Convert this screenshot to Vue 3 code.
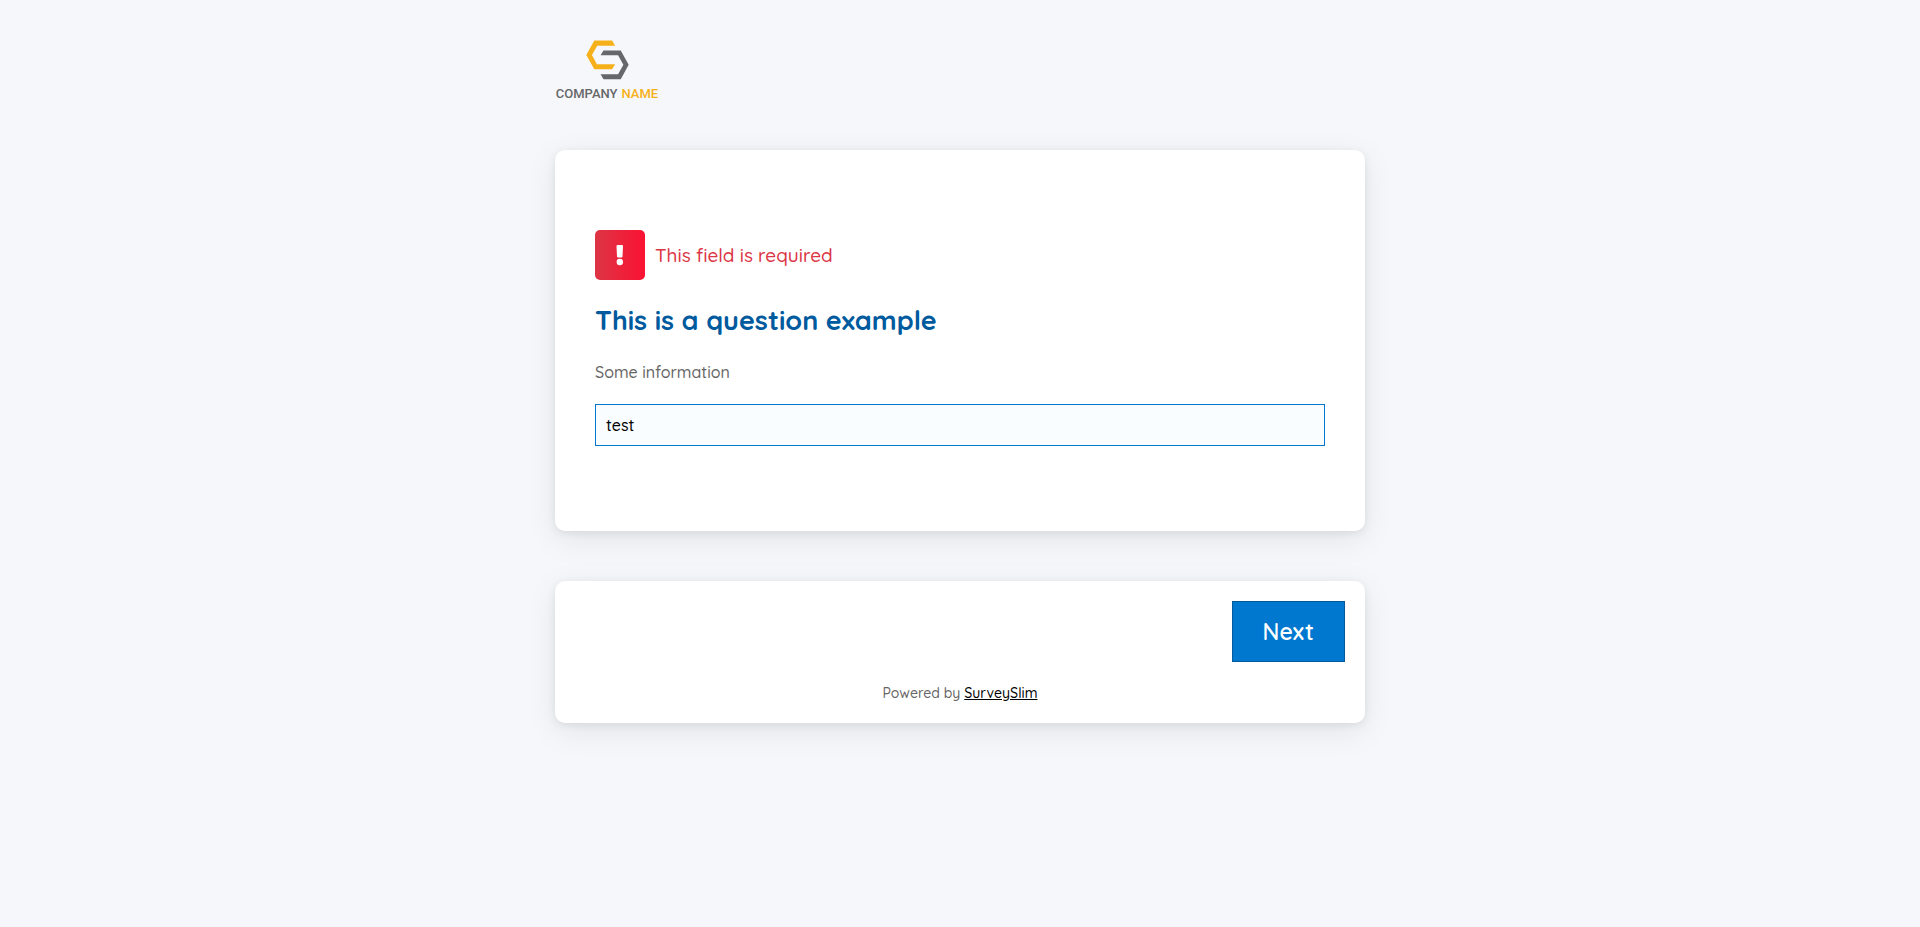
<script setup>
import { ref } from 'vue'

const answer = ref('test')
</script>

<template>
  <main class="page">
    <header class="brand">
      <svg class="mark" viewBox="0 0 130 120" aria-hidden="true">
        <path d="M25 1H79L88 17H34L18 45L33 73H88L79 88H25L1 45Z" fill="#f6b11a" />
        <path d="M53 31H105L129 74L105 118H53L44 103H97L113 74L97 46H44Z" fill="#666769" />
      </svg>
      <div class="name"><span>COMPANY</span><span class="accent">NAME</span></div>
    </header>

    <form class="survey" @submit.prevent>
      <section class="card question">
        <div class="error" role="alert">
          <span class="error-icon">
            <svg viewBox="0 0 50 50" aria-hidden="true">
              <path d="M21.500 16Q21.500 15 22.500 15H27Q28 15 28 16L27.500 26.500Q27.400 27.500 26.500 27.500H23Q22.100 27.500 22 26.500Z" fill="#fff" />
              <circle cx="24.800" cy="32" r="3.200" fill="#fff" />
            </svg>
          </span>
          <span>This field is required</span>
        </div>
        <label class="title" for="answer">This is a question example</label>
        <p id="hint" class="hint">Some information</p>
        <input id="answer" v-model="answer" class="field" type="text" aria-describedby="hint" />
      </section>

      <section class="card footer">
        <button class="next" type="submit">Next</button>
        <p class="powered">Powered by <a href="#">SurveySlim</a></p>
      </section>
    </form>
  </main>
</template>

<style>
body {
  background: #f6f7fb;
}
</style>

<style scoped>
.page {
  box-sizing: border-box;
  max-width: 850px;
  margin: 0 auto;
  padding: 40px 20px;
  font-family: Quicksand, Lato, sans-serif;
  font-weight: 500;
  color: #666;
}
.brand {
  display: flex;
  flex-direction: column;
  align-items: center;
  width: 104px;
}
.mark {
  display: block;
  width: 43px;
  height: 40px;
}
.name {
  display: flex;
  gap: 4px;
  margin-top: 6px;
  font: 500 13px/16px Roboto, sans-serif;
  color: #666769;
}
.accent {
  color: #f6b11a;
}
.survey {
  display: flex;
  flex-direction: column;
  gap: 50px;
  margin-top: 48px;
}
.card {
  border-radius: 10px;
  background: #fff;
  box-shadow: 0 2px 8px rgba(0, 0, 0, 0.08), 0 8px 32px rgba(0, 0, 0, 0.08);
}
.question {
  display: flex;
  flex-direction: column;
  padding: 80px 40px 85px;
}
.error {
  display: flex;
  align-items: center;
  gap: 10px;
  font-size: 19px;
  line-height: 24px;
  color: #dc3545;
}
.error-icon {
  width: 50px;
  height: 50px;
  border-radius: 5px;
  background: linear-gradient(to right, #dc3545, #fb1232);
}
.error-icon svg {
  display: block;
}
.title {
  margin-top: 22px;
  font-size: 27px;
  font-weight: 700;
  line-height: 36px;
  color: #005a9e;
}
.hint {
  margin: 24px 0 22px;
  font-size: 16px;
  line-height: 20px;
}
.field {
  box-sizing: border-box;
  width: 100%;
  height: 42px;
  padding: 0 10px;
  border: 1px solid #0078d0;
  border-radius: 0;
  outline: none;
  background: #f9fdff;
  font: 500 16px/20px Quicksand, Lato, sans-serif;
  color: #000;
}
.footer {
  display: flex;
  flex-direction: column;
  padding: 20px;
}
.next {
  align-self: flex-end;
  padding: 15px 30px;
  border: 1px solid #005a9e;
  background: #0078d0;
  font: 600 23px/29px Quicksand, Lato, sans-serif;
  color: #fff;
  cursor: pointer;
}
.powered {
  margin: 22px 0 1px;
  font-size: 14px;
  line-height: 18px;
  text-align: center;
}
.powered a {
  color: #000;
}
</style>
